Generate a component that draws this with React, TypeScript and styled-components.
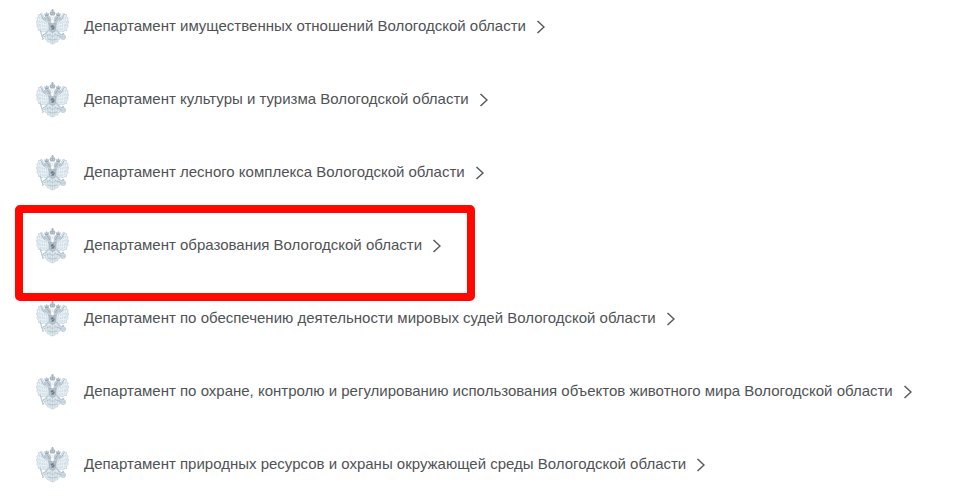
import React from 'react';
import styled, { createGlobalStyle } from 'styled-components';

const GlobalStyle = createGlobalStyle`
  body {
    margin: 0;
    background: #fff;
    color: #4f5356;
    font: 15px/20px "Liberation Sans", Arial, sans-serif;
  }
`;

const List = styled.ul`
  display: flex;
  flex-direction: column;
  align-items: flex-start;
  gap: 37px;
  margin: 0;
  padding: 9px 36px;
  list-style: none;
`;

const Item = styled.li`
  position: relative;
`;

const DepartmentLink = styled.a`
  display: flex;
  align-items: center;
  color: inherit;
  text-decoration: none;
`;

const Emblem = styled.svg`
  flex: none;
  width: 33px;
  height: 36px;
  margin-right: 15px;
`;

const Name = styled.span`
  padding-bottom: 2px;
`;

const Chevron = styled.svg`
  flex: none;
  width: 9px;
  height: 14px;
  margin-left: 10px;
`;

const Highlight = styled.div`
  position: absolute;
  inset: -23px -34px -37px -21px;
  border: 8px solid #ff0800;
  border-radius: 5px;
  pointer-events: none;
`;

const departments = [
  { name: 'Департамент имущественных отношений Вологодской области' },
  { name: 'Департамент культуры и туризма Вологодской области' },
  { name: 'Департамент лесного комплекса Вологодской области' },
  { name: 'Департамент образования Вологодской области', highlighted: true },
  { name: 'Департамент по обеспечению деятельности мировых судей Вологодской области' },
  { name: 'Департамент по охране, контролю и регулированию использования объектов животного мира Вологодской области' },
  { name: 'Департамент природных ресурсов и охраны окружающей среды Вологодской области' },
];

const wing =
  'M13 12 L10 11 L7.5 8 L7 5.5 L5 4 L4 5.5 L2.5 5.5 L2.3 8 L.8 9 L1.5 11 L.3 13 L1.3 15 L.8 17.5 L2.3 19 L2.5 21.5 L4.5 21.5 L5.5 23 L8 22 L10 23 L13.5 21 Z';

function EmblemHalf() {
  return (
    <>
      <path d={wing} fill="#e3edf3" stroke="#c3d0d9" strokeWidth=".7" />
      <path
        d="M3.5 8 L4.5 20 M5.5 7 L7 21 M8 10 L9 21 M1.8 12 L3.5 18 M10.5 12 L11 21"
        stroke="#bfd0db"
        strokeWidth=".6"
        fill="none"
      />
      <path d="M2 10 L10 13 M2 14 L11 16 M3 18 L11 19" stroke="#f8fbfd" strokeWidth=".6" />
      <path d="M4.5 5 L6 7 L7 10 L10 12.5" stroke="#b0bec9" strokeWidth="1" fill="none" />
      <path
        d="M15.5 15.5 L14.8 12.5 L15 10 L13.8 7.8 L11.5 6.8 L9 7.6 L7.7 9.6 L9.5 9.3 L8.7 10.8 L11 10.5 L12 13 L13 16 Z"
        fill="#c2ced7"
        stroke="#a5b4bf"
        strokeWidth=".5"
      />
      <path d="M11 8.4 L12.7 9.5 L13.4 12" stroke="#8799a7" strokeWidth=".7" fill="none" />
      <path d="M9 7.2 L8 4.6 L9.5 4.8 L10.6 3 L11.8 4.5 L13.3 4.3 L12.5 7 Z" fill="#b0bfca" />
      <path d="M9.3 6.5 H12.3" stroke="#8496a4" strokeWidth=".6" />
      <path d="M12.5 21 L9 25 L7 26 M11.5 23 L10 27 L7.5 28" stroke="#b4c3ce" strokeWidth="1.1" fill="none" />
    </>
  );
}

function EagleEmblem() {
  return (
    <Emblem viewBox="0 0 33 36" aria-hidden="true">
      <EmblemHalf />
      <g transform="translate(33 0) scale(-1 1)">
        <EmblemHalf />
      </g>
      <path
        d="M14.4 6.5 L13.6 4 L14.4 2.6 L15.8 2.5 L15.8 1.5 H15 V.8 H16 V0 H17 V.8 H18 V1.5 H17.2 V2.5 L18.6 2.6 L19.4 4 L18.6 6.5 Z"
        fill="#a3b3bf"
      />
      <path d="M15.3 3.7 L15.7 5.2 M17.7 3.7 L17.3 5.2" stroke="#d3dfe7" strokeWidth=".6" />
      <path d="M14.2 7.5 L16.5 8.5 L18.8 7.5 M16.5 8.5 V11" stroke="#d0dbe3" strokeWidth=".6" fill="none" />
      <path
        d="M12 22 L9.5 26 L9 30 L11 31 L11.5 33 L13.5 33 L14.5 34.5 L16.5 35 L18.5 34.5 L19.5 33 L21.5 33 L22 31 L24 30 L23.5 26 L21 22 Z"
        fill="#dfeaf1"
        stroke="#bdcad4"
        strokeWidth=".6"
      />
      <path
        d="M11.5 25 L12 31 M14 24 L14.3 33 M16.5 24 V34.5 M19 24 L18.7 33 M21.5 25 L21 31"
        stroke="#b5c4cf"
        strokeWidth=".6"
      />
      <path d="M10.5 27 L14 25.5 L16.5 28 L19 25.5 L22.5 27 M12 30 L16.5 31 L21 30" stroke="#a6b7c3" strokeWidth=".7" fill="none" />
      <path d="M13 14.5 H20 V20.5 L18.8 22.5 L16.5 23.8 L14.2 22.5 L13 20.5 Z" fill="#b2bfc9" stroke="#95a5b1" strokeWidth=".4" />
      <path d="M14.5 17 L17 16 L18.8 18 L17.7 20.5 L15.3 20.8 L15.6 18.8 Z" fill="#687782" />
      <path d="M14 20.5 L18.5 17 M14.3 22 L18.5 21.3" stroke="#cbd6dd" strokeWidth=".5" />
      <path d="M4 20.5 L7.2 30.5" stroke="#b8c6d0" strokeWidth="1.1" />
      <path d="M5.3 27 L8.5 26 M6.2 31 L8 29" stroke="#b8c6d0" strokeWidth=".8" />
      <circle cx="27" cy="28" r="2.6" fill="#cfdde6" stroke="#b4c2cc" strokeWidth=".6" />
      <path d="M22 26.5 L25 27.5 M27 24 V26 M26 24.8 H28" stroke="#a9b9c4" strokeWidth=".8" />
      <path d="M24.6 28 H29.4" stroke="#a9b9c4" strokeWidth=".5" />
    </Emblem>
  );
}

export default function App() {
  return (
    <>
      <GlobalStyle />
      <List>
        {departments.map(({ name, highlighted }) => (
          <Item key={name}>
            <DepartmentLink href="#">
              <EagleEmblem />
              <Name>{name}</Name>
              <Chevron viewBox="0 0 9 14" aria-hidden="true">
                <path d="M1.5 1 L8 7 L1.5 13" fill="none" stroke="#555a5e" strokeWidth="1.5" />
              </Chevron>
            </DepartmentLink>
            {highlighted && <Highlight />}
          </Item>
        ))}
      </List>
    </>
  );
}
